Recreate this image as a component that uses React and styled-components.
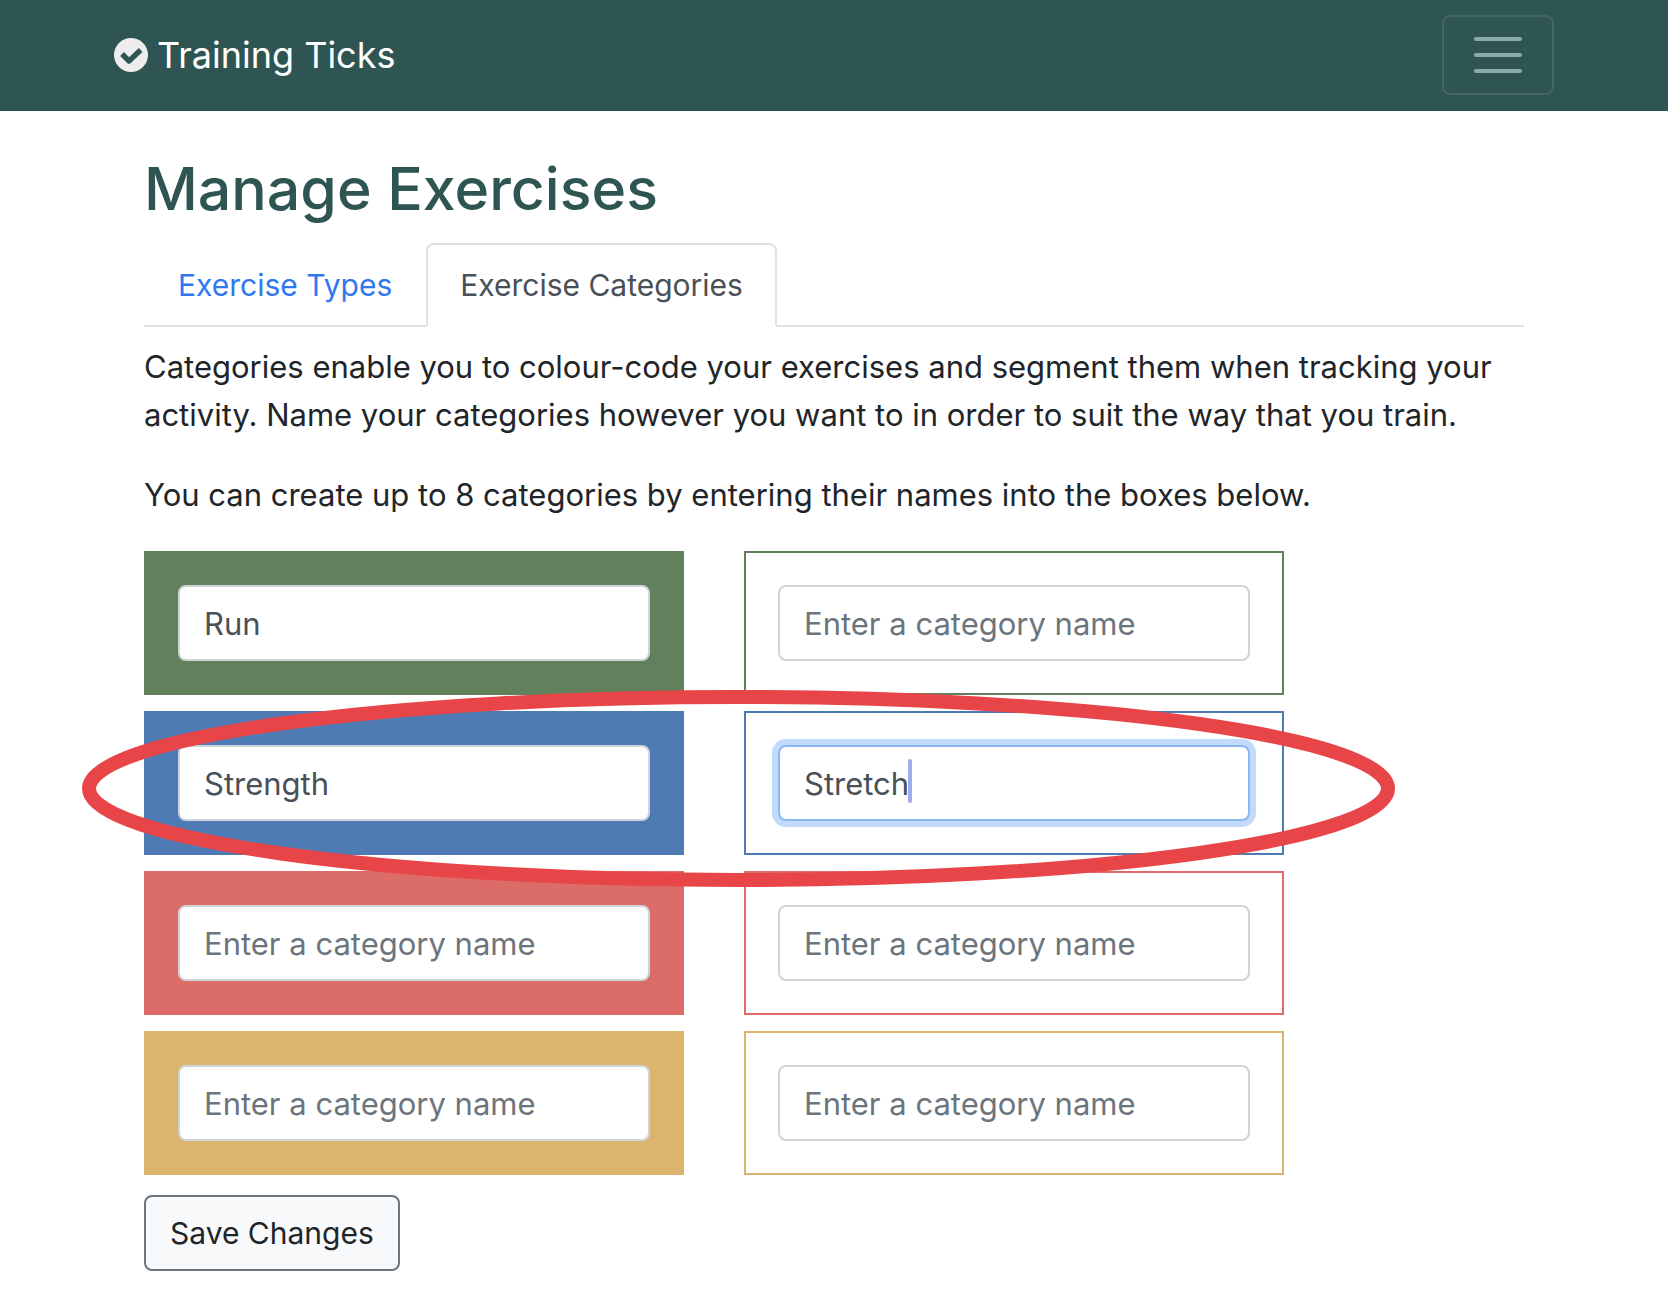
import React from "react";
import styled, { createGlobalStyle, css } from "styled-components";

const GlobalStyle = createGlobalStyle`
  *, *::before, *::after { box-sizing: border-box; }
  body {
    margin: 0;
    background: #fff;
    color: #212529;
    font-family: Inter, "Liberation Sans", sans-serif;
    font-size: 30px;
    line-height: 48px;
  }
`;

const Navbar = styled.header`
  background: #2e5552;
  padding: 15px 32px 16px;
`;

const NavInner = styled.div`
  display: flex;
  align-items: center;
  justify-content: space-between;
  max-width: 1440px;
  margin: 0 auto;
`;

const Brand = styled.a`
  display: flex;
  align-items: center;
  gap: 9px;
  color: #fff;
  font-size: 36px;
  line-height: 60px;
  text-decoration: none;

  svg {
    width: 34px;
    height: 34px;
  }
`;

const Toggler = styled.button`
  display: flex;
  padding: 8px 24px;
  border: 2px solid rgba(255, 255, 255, 0.1);
  border-radius: 8px;
  background: transparent;
  cursor: pointer;

  svg {
    width: 60px;
    height: 60px;
  }
`;

const Main = styled.main`
  max-width: 1440px;
  margin: 0 auto;
  padding: 40px 30px 24px;
`;

const Title = styled.h1`
  margin: 0 0 16px;
  color: #2e5552;
  font-size: 59px;
  font-weight: 500;
  line-height: 76px;
`;

const Tabs = styled.nav`
  display: flex;
  margin-bottom: 16px;
  border-bottom: 2px solid #dee2e6;
`;

const Tab = styled.a`
  margin-bottom: -2px;
  padding: 16px 32px;
  border: 2px solid transparent;
  border-radius: 8px 8px 0 0;
  color: #2f78ee;
  text-decoration: none;

  ${(p) =>
    p.$active &&
    css`
      border-color: #dee2e6 #dee2e6 #fff;
      background: #fff;
      color: #495057;
    `}
`;

const Text = styled.p`
  margin: 0 0 32px;
  font-size: 31px;
`;

const Form = styled.form`
  display: flex;
  flex-direction: column;
  align-items: flex-start;
  gap: 20px;
`;

const CategoryArea = styled.div`
  position: relative;
  width: 100%;
  max-width: 1140px;
`;

const CategoryGrid = styled.div`
  display: grid;
  grid-template-columns: 1fr 1fr;
  gap: 16px 60px;
`;

const Swatch = styled.div`
  padding: 32px;
  border: 2px solid ${(p) => p.$color};
  background: ${(p) => (p.$filled ? p.$color : "#fff")};
`;

const Field = styled.div`
  position: relative;
`;

const Input = styled.input`
  display: block;
  width: 100%;
  height: 76px;
  padding: 12px 24px;
  border: 2px solid #ced4da;
  border-radius: 8px;
  outline: none;
  background: #fff;
  color: #495057;
  font: inherit;
  font-size: 31px;

  &::placeholder {
    color: #6c757d;
    opacity: 1;
  }

  ${(p) =>
    p.$focused &&
    css`
      border-color: #8cb8f0;
      box-shadow: 0 0 0 6px #c2dbfd;
    `}
`;

const Caret = styled.span`
  position: absolute;
  top: 14px;
  left: 130px;
  width: 4px;
  height: 44px;
  border-radius: 2px;
  background: #9fadee;
`;

const Highlight = styled.svg`
  position: absolute;
  top: 139px;
  left: -62px;
  width: 1313px;
  height: 197px;
  pointer-events: none;
`;

const SaveButton = styled.button`
  padding: 12px 24px;
  border: 2px solid #6c757d;
  border-radius: 8px;
  background: #f8f9fa;
  color: #212529;
  font: inherit;
  cursor: pointer;
`;

const categories = [
  { color: "#62805c", filled: true, value: "Run" },
  { color: "#62805c", filled: false, value: "" },
  { color: "#4f7bb5", filled: true, value: "Strength" },
  { color: "#4f7bb5", filled: false, value: "Stretch", focused: true },
  { color: "#dc6c67", filled: true, value: "" },
  { color: "#dc6c67", filled: false, value: "" },
  { color: "#dbb56d", filled: true, value: "" },
  { color: "#dbb56d", filled: false, value: "" },
];

export default function App() {
  return (
    <>
      <GlobalStyle />
      <Navbar>
        <NavInner>
          <Brand href="#">
            <svg viewBox="0 0 102 102" fill="none" aria-hidden="true">
              <circle cx="51" cy="51" r="51" fill="#ededed" />
              <path
                d="M24 48L45 69L80 36"
                stroke="#2e5552"
                strokeWidth="16"
                strokeLinejoin="round"
              />
            </svg>
            Training Ticks
          </Brand>
          <Toggler type="button" aria-label="Toggle navigation">
            <svg viewBox="0 0 30 30" fill="none" aria-hidden="true">
              <path
                d="M4 7h22M4 15h22M4 23h22"
                stroke="#8baaab"
                strokeWidth="2"
                strokeLinecap="round"
              />
            </svg>
          </Toggler>
        </NavInner>
      </Navbar>
      <Main>
        <Title>Manage Exercises</Title>
        <Tabs>
          <Tab href="#types">Exercise Types</Tab>
          <Tab href="#categories" $active aria-current="page">
            Exercise Categories
          </Tab>
        </Tabs>
        <Text>
          Categories enable you to colour-code your exercises and segment them
          when tracking your activity. Name your categories however you want to
          in order to suit the way that you train.
        </Text>
        <Text>
          You can create up to 8 categories by entering their names into the
          boxes below.
        </Text>
        <Form onSubmit={(e) => e.preventDefault()}>
          <CategoryArea>
            <CategoryGrid>
              {categories.map((c, i) => (
                <Swatch key={i} $color={c.color} $filled={c.filled}>
                  <Field>
                    <Input
                      type="text"
                      aria-label={`Category ${i + 1}`}
                      placeholder="Enter a category name"
                      defaultValue={c.value}
                      $focused={c.focused}
                    />
                    {c.focused && <Caret />}
                  </Field>
                </Swatch>
              ))}
            </CategoryGrid>
            <Highlight viewBox="0 0 1313 197" fill="none" aria-hidden="true">
              <ellipse
                cx="656.5"
                cy="98.5"
                rx="649.5"
                ry="91.5"
                stroke="#e84549"
                strokeWidth="14"
              />
            </Highlight>
          </CategoryArea>
          <SaveButton type="submit">Save Changes</SaveButton>
        </Form>
      </Main>
    </>
  );
}
